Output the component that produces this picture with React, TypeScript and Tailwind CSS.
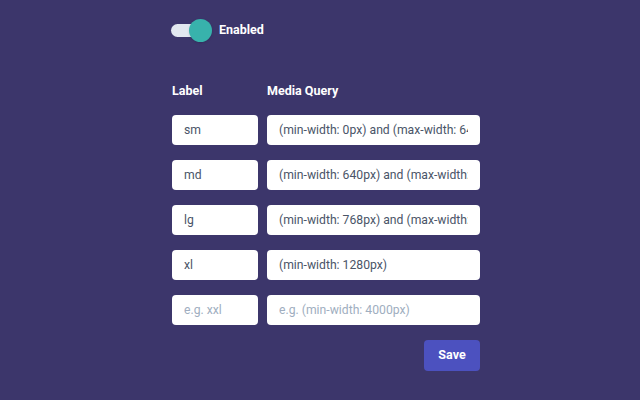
import { useState } from "react";

const rows = [
  { label: "sm", query: "(min-width: 0px) and (max-width: 640px)" },
  { label: "md", query: "(min-width: 640px) and (max-width: 768px)" },
  { label: "lg", query: "(min-width: 768px) and (max-width: 1280px)" },
  { label: "xl", query: "(min-width: 1280px)" },
];

const field =
  "h-[30px] rounded bg-white px-3 text-[12.2px] text-[#4a5568] placeholder-[#a0aec0] outline-none";

export default function App() {
  const [enabled, setEnabled] = useState(true);

  return (
    <div
      className="w-[640px] h-[400px] bg-[#3c366b] text-white"
      style={{ fontFamily: "Roboto, 'Noto Sans', sans-serif" }}
    >
      <div className="ml-[171px] w-[310px] pt-[19px]">
        {/* Toggle */}
        <div className="flex items-center gap-[7px]">
          <button
            onClick={() => setEnabled(!enabled)}
            className="relative w-[41px] h-[23px] flex items-center"
          >
            <span className="block w-[36px] h-[13px] rounded-full bg-[#e2e8f0]" />
            <span
              className={`absolute top-0 w-[23px] h-[23px] rounded-full bg-[#38b2ac] shadow ${
                enabled ? "left-[18px]" : "left-0"
              }`}
            />
          </button>
          <span className="text-[12.5px] font-bold">Enabled</span>
        </div>

        {/* Table */}
        <div className="mt-[40px] pl-[1px]">
          <div className="flex gap-[9px] text-[12.5px] font-bold h-[18px] items-center">
            <div className="w-[86px]">Label</div>
            <div className="flex-1">Media Query</div>
          </div>
          <div className="mt-[15px] flex flex-col gap-[15px]">
            {rows.map((r) => (
              <div key={r.label} className="flex gap-[9px]">
                <input defaultValue={r.label} className={`w-[86px] ${field}`} />
                <input defaultValue={r.query} className={`w-[213px] ${field}`} />
              </div>
            ))}
            <div className="flex gap-[9px]">
              <input placeholder="e.g. xxl" className={`w-[86px] ${field}`} />
              <input placeholder="e.g. (min-width: 4000px)" className={`w-[213px] ${field}`} />
            </div>
          </div>
          <div className="flex justify-end w-[308px] mt-[15px]">
            <button className="w-[56px] h-[31px] rounded bg-[#4c51bf] text-[12.5px] font-bold text-white">
              Save
            </button>
          </div>
        </div>
      </div>
    </div>
  );
}
